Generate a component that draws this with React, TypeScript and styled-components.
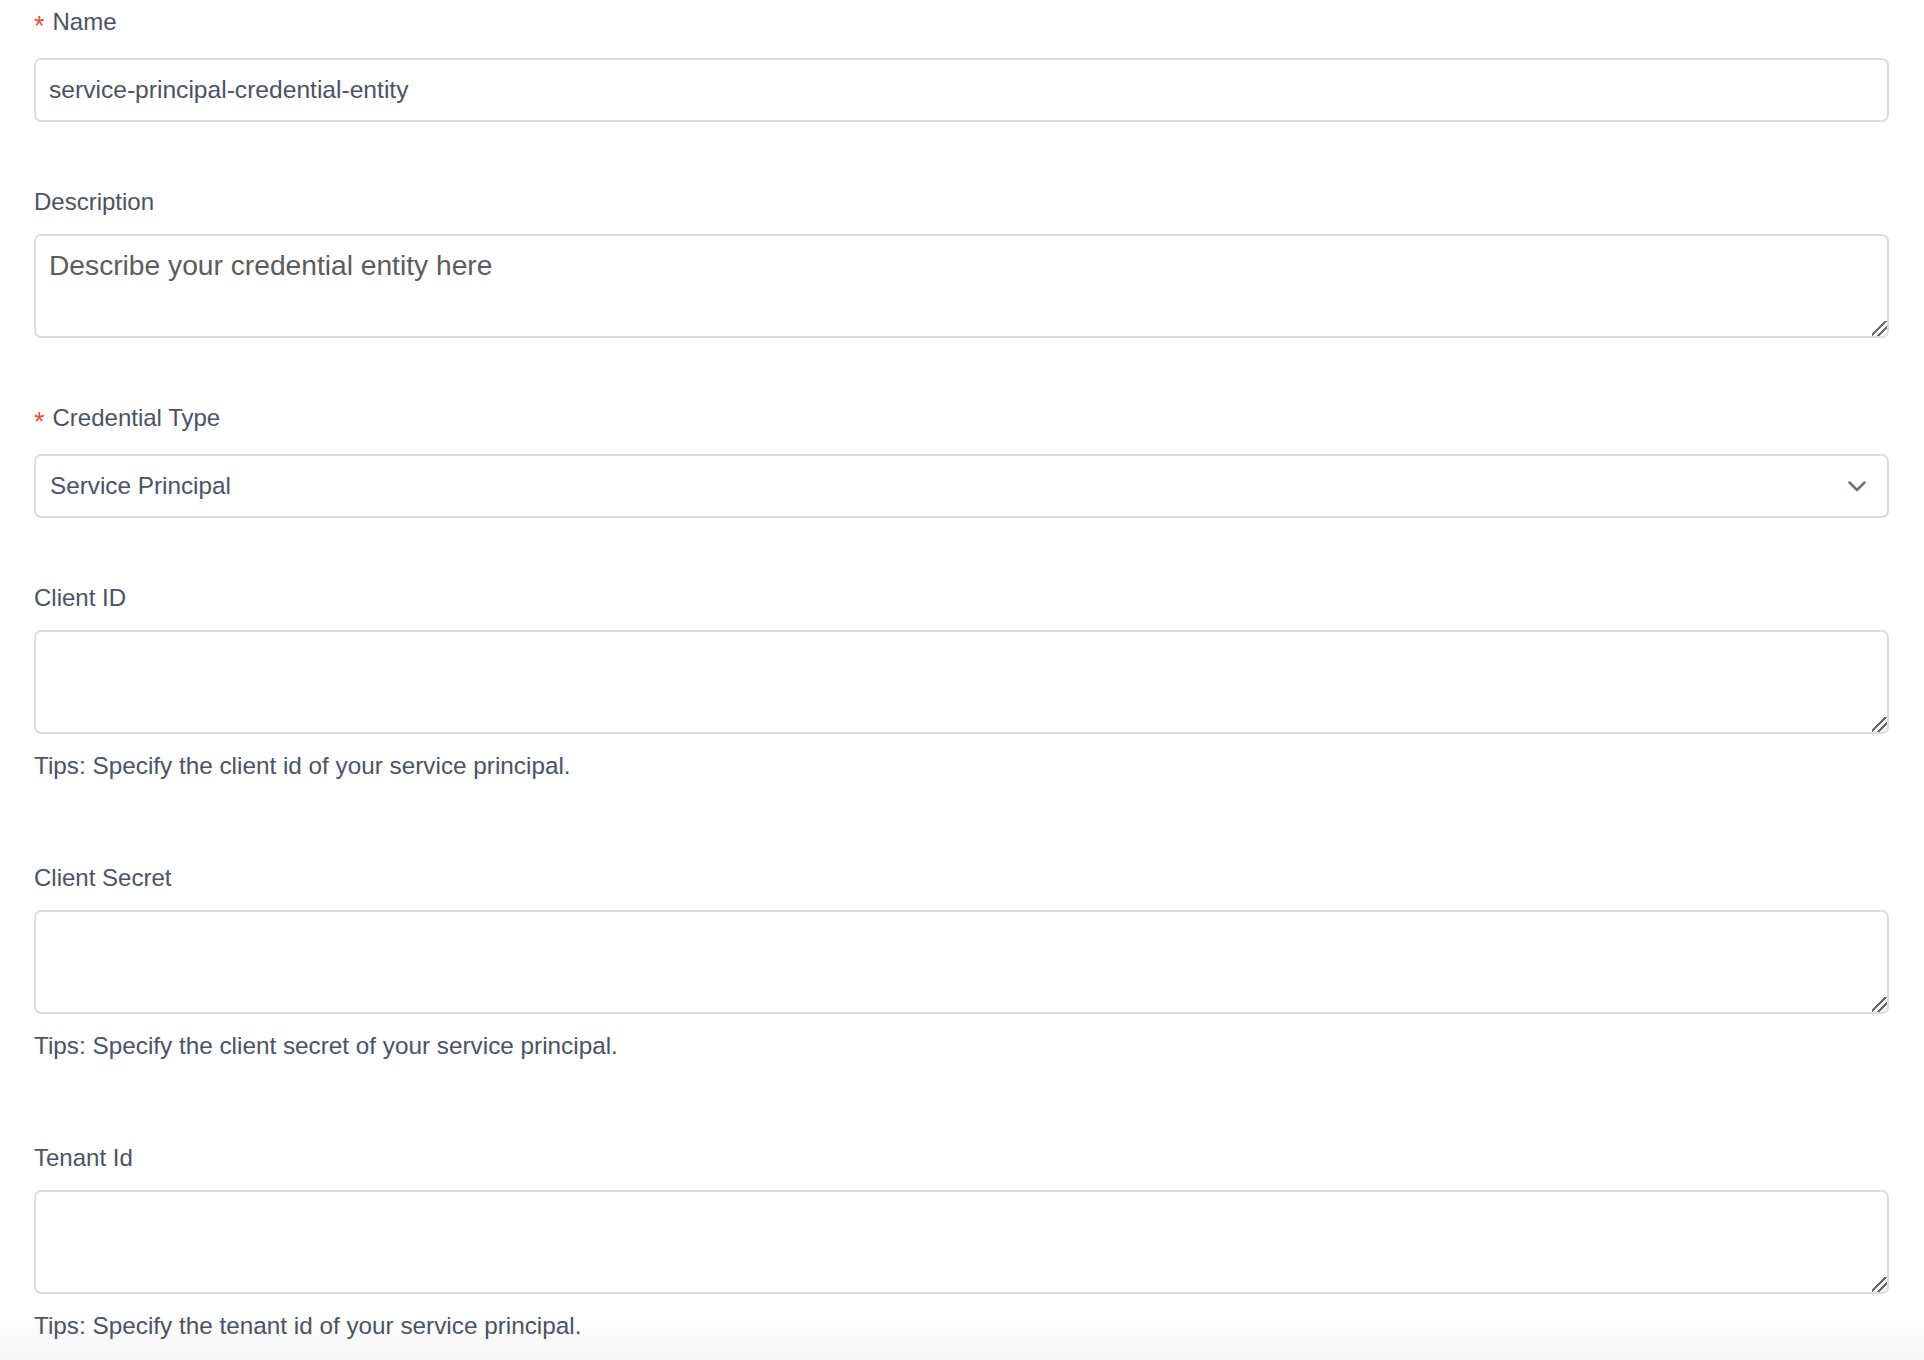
import React from "react";
import styled, { createGlobalStyle } from "styled-components";

const GlobalStyle = createGlobalStyle`
  html, body { margin: 0; padding: 0; }
  html { height: 100%; }
  body {
    min-height: 100%;
    background: linear-gradient(to bottom, #ffffff 0, #ffffff calc(100% - 44px), #f5f5f5 100%);
    font-family: "Liberation Sans", Arial, Helvetica, sans-serif;
    color: #4a5366;
  }
`;

const Form = styled.form`
  display: flex;
  flex-direction: column;
  padding: 5px 35px 0 34px;
`;

const FormItem = styled.div`
  display: flex;
  flex-direction: column;
  padding-bottom: 63px;
`;

const Label = styled.label<{ $required?: boolean }>`
  display: flex;
  align-items: flex-start;
  padding-top: 1px;
  font-size: 24px;
  line-height: 32px;
  color: #4a5366;
  margin-bottom: ${(p) => (p.$required ? 18 : 16)}px;
`;

const Asterisk = styled.span`
  color: #e5533d;
  font-size: 27px;
  line-height: 1;
  margin-top: 7px;
  margin-right: 8px;
`;

const fieldBase = `
  box-sizing: border-box;
  width: 100%;
  border: 2px solid #dcdce2;
  border-radius: 7px;
  color: #4a5366;
  background: #ffffff;
  font-family: inherit;
  outline: none;
`;

const TextInput = styled.input`
  ${fieldBase}
  height: 64px;
  padding: 0 13px;
  font-size: 24.6px;
`;

const TextArea = styled.textarea`
  ${fieldBase}
  display: block;
  height: 104px;
  padding: 11px 13px;
  font-size: 28.2px;
  line-height: 36px;
  resize: vertical;
  &::placeholder {
    color: #5c5c5c;
    opacity: 1;
  }
  &::-webkit-resizer {
    background: linear-gradient(
      135deg,
      transparent 0 42%,
      #6c6c6c 42% 51%,
      transparent 51% 65%,
      #6c6c6c 65% 74%,
      transparent 74%
    );
  }
`;

const Select = styled.div`
  ${fieldBase}
  display: flex;
  align-items: center;
  justify-content: space-between;
  height: 64px;
  padding: 0 21px 0 14px;
  font-size: 24.3px;
  cursor: pointer;
`;

const Tip = styled.div`
  margin-top: 16px;
  margin-bottom: 16px;
  font-size: 24.3px;
  line-height: 32px;
  color: #4a5366;
`;

const Chevron = () => (
  <svg width="18" height="11" viewBox="0 0 18 11" fill="none">
    <path d="M1.5 1.5 L9 9 L16.5 1.5" stroke="#6b7180" strokeWidth="2.5" strokeLinecap="round" strokeLinejoin="round" />
  </svg>
);

export default function App() {
  return (
    <>
      <GlobalStyle />
      <Form onSubmit={(e) => e.preventDefault()}>
        <FormItem>
          <Label $required>
            <Asterisk>*</Asterisk>Name
          </Label>
          <TextInput defaultValue="service-principal-credential-entity" />
        </FormItem>
        <FormItem>
          <Label>Description</Label>
          <TextArea placeholder="Describe your credential entity here" />
        </FormItem>
        <FormItem>
          <Label $required>
            <Asterisk>*</Asterisk>Credential Type
          </Label>
          <Select>
            <span>Service Principal</span>
            <Chevron />
          </Select>
        </FormItem>
        <FormItem>
          <Label>Client ID</Label>
          <TextArea />
          <Tip>Tips: Specify the client id of your service principal.</Tip>
        </FormItem>
        <FormItem>
          <Label>Client Secret</Label>
          <TextArea />
          <Tip>Tips: Specify the client secret of your service principal.</Tip>
        </FormItem>
        <FormItem>
          <Label>Tenant Id</Label>
          <TextArea />
          <Tip>Tips: Specify the tenant id of your service principal.</Tip>
        </FormItem>
      </Form>
    </>
  );
}
